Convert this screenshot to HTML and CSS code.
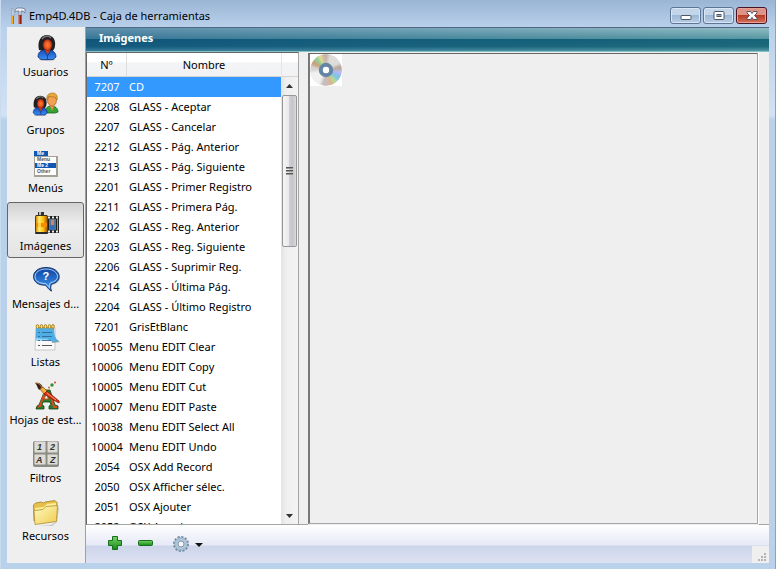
FILE: index.html
```html
<!DOCTYPE html>
<html lang="es">
<head>
<meta charset="utf-8">
<title>Emp4D.4DB - Caja de herramientas</title>
<link rel="stylesheet" href="styles.css">
</head>
<body>
<div class="window">
  <header class="titlebar">
    <svg class="app-icon" viewBox="0 0 16 18" aria-hidden="true">
      <path d="M2 1l2 2v6H2z" fill="#dfe6ee" stroke="#7d8797" stroke-width=".6"/>
      <rect x="1" y="9" width="3" height="8" fill="#f5a81c"/><rect x="3" y="9" width="1" height="8" fill="#c86a08"/>
      <path d="M5 5V3l2-2h5l3 1v4l-2-2h-2v5H9V4H7z" fill="#eef2f7" stroke="#69758a" stroke-width=".8"/>
      <rect x="8.500" y="8" width="3" height="9" fill="#e04420"/><rect x="10" y="8" width="1.500" height="9" fill="#96200e"/>
    </svg>
    <h1 class="title">Emp4D.4DB - Caja de herramientas</h1>
    <div class="controls">
      <button class="control" aria-label="Minimizar"><svg viewBox="0 0 28 15"><rect x="9.500" y="7.500" width="10" height="4" rx="1" fill="#fff" stroke="#4c5768"/></svg></button>
      <button class="control" aria-label="Maximizar"><svg viewBox="0 0 28 15"><rect x="9.500" y="3.500" width="10" height="8" rx="1" fill="#fff" stroke="#4c5768"/><rect x="12.500" y="6.500" width="4" height="2" fill="#8ea9cb" stroke="#4c5768"/></svg></button>
      <button class="control close" aria-label="Cerrar"><svg viewBox="0 0 28 15"><path d="M9.500 3.500h3.500l1.500 2 1.500-2h3.500v1.500l-2.500 2.500 2.500 2.500v1.500h-3.500l-1.500-2-1.500 2H9.500V10l2.500-2.500L9.500 5z" fill="#fff" stroke="#56555f"/></svg></button>
    </div>
  </header>

  <div class="body">
    <nav class="sidebar">
      <button class="nav-item">
        <svg viewBox="0 0 32 32" aria-hidden="true">
          <defs>
            <radialGradient id="face"><stop offset="0" stop-color="#ff8038"/><stop offset=".6" stop-color="#ea5420"/><stop offset="1" stop-color="#a62408"/></radialGradient>
            <linearGradient id="suit" x2="0" y2="1"><stop offset="0" stop-color="#1650b8"/><stop offset="1" stop-color="#3a8cf4"/></linearGradient>
            <g id="woman">
              <ellipse cx="17" cy="27.500" rx="8" ry="1.500" fill="#999" opacity=".6"/>
              <path d="M9 18C7 9 11 3 17 3c6 0 9 5 8 11-.5 4-3 6-6 6z" fill="#202022"/>
              <path d="M12 7c2-3 7-4 9-1" fill="none" stroke="#777" stroke-width="1.500"/>
              <path d="M8 25c0-5 3-7 7-7h4c4 0 7 3 7 7l-3 2.500H11z" fill="url(#suit)" stroke="#0b2c78" stroke-width=".8"/>
              <path d="M15 18h5l-2.500 5z" fill="#c63b14"/>
              <ellipse cx="17.500" cy="13" rx="4.600" ry="5.800" fill="url(#face)"/>
              <path d="M14.500 19l3 5 3-5M17.500 24v3" fill="none" stroke="#123784" stroke-width=".8"/>
            </g>
          </defs>
          <use href="#woman"/>
        </svg>
        <span>Usuarios</span>
      </button>
      <button class="nav-item">
        <svg viewBox="0 0 32 32" aria-hidden="true">
          <path d="M15 22c0-4 3-6 6-6 4 0 7 2 7 6l-3 1h-8z" fill="#35a238" stroke="#15651b" stroke-width=".8"/>
          <path d="M20 16h4l-2 5z" fill="#ef9245"/>
          <ellipse cx="22" cy="10.500" rx="4.500" ry="5.500" fill="#f2a052" stroke="#a65315" stroke-width=".6"/>
          <path d="M17 10c-1-5 2-7 6-7 3 0 5 3 4 7l-2-3c-2 0-4 0-6-1z" fill="#e9aa37" stroke="#9b641c" stroke-width=".6"/>
          <use href="#woman" transform="translate(-3 3.500) scale(.78)"/>
        </svg>
        <span>Grupos</span>
      </button>
      <button class="nav-item">
        <svg viewBox="0 0 32 32" aria-hidden="true">
          <rect x="4" y="8" width="24" height="21" fill="#a5a195"/><rect x="5" y="9" width="21" height="18" fill="#fff"/>
          <rect x="4" y="3" width="14" height="5" fill="#0e58b4"/><rect x="5" y="15" width="21" height="5" fill="#0e58b4"/>
          <g font-family="Liberation Sans" font-weight="bold" font-size="5"><text x="7" y="7" fill="#fff">Me</text><text x="7" y="13" fill="#555">Menu</text><text x="7" y="19" fill="#fff">Me 2</text><text x="7" y="25" fill="#555">Other</text></g>
        </svg>
        <span>Menús</span>
      </button>
      <button class="nav-item selected" aria-current="page">
        <svg viewBox="0 0 32 32" aria-hidden="true">
          <defs><linearGradient id="roll"><stop offset="0" stop-color="#c47800"/><stop offset=".3" stop-color="#fff06a"/><stop offset=".65" stop-color="#ffbd12"/><stop offset="1" stop-color="#9d5500"/></linearGradient></defs>
          <rect x="16" y="10" width="13" height="17" fill="#222"/>
          <rect x="19" y="13" width="7" height="11" fill="#557590"/><rect x="21" y="14" width="3" height="5" fill="#d2826b"/><rect x="20" y="19" width="5" height="5" fill="#356fb0"/>
          <path d="M18 11.500h11M18 25.500h11" stroke="#eee" stroke-width="2" stroke-dasharray="2 2"/>
          <path d="M27.500 13v11" stroke="#999" stroke-width="1"/>
          <rect x="8" y="6" width="6" height="4" fill="#333"/><rect x="9" y="6" width="2" height="3" fill="#bbb"/>
          <rect x="5.500" y="9.500" width="12" height="17" rx="1" fill="url(#roll)" stroke="#59400c"/>
          <rect x="6" y="17" width="11" height="4" fill="#f48b00"/><rect x="8" y="17" width="3" height="4" fill="#ffd144"/>
          <rect x="5" y="26" width="13" height="2" rx="1" fill="#2a2a2a"/><rect x="6" y="9" width="11" height="1" fill="#3d3420"/>
        </svg>
        <span>Imágenes</span>
      </button>
      <button class="nav-item">
        <svg viewBox="0 0 32 32" aria-hidden="true">
          <defs><linearGradient id="bubble" x2="0" y2="1"><stop offset="0" stop-color="#0b43a0"/><stop offset="1" stop-color="#3f9bf4"/></linearGradient></defs>
          <path d="M17 4C9 4 4 8 4 13c0 6 5 9 11 9 2 0 3 4 7 6-1-3-1-5 0-7 5-1 8-4 8-8 0-5-5-9-13-9z" fill="#777" opacity=".5"/>
          <path d="M16 3.500C8.500 3.500 3.500 7.500 3.500 12.500c0 5.500 5 8.500 11 8.500 2 0 3 4 7 6-1.500-3-1-5 0-7 5-1 7.500-4 7.500-7.500 0-5-5-9-13-9z" fill="url(#bubble)" stroke="#183b75"/>
          <path d="M16 5C9.500 5 5 8.500 5 12.500c0 4.500 4.500 7 10 7 2 0 3 3 4.500 4-.5-3 .5-4.500 1.500-5 4-1 6.500-3 6.500-6C27.500 8.500 23 5 16 5z" fill="none" stroke="#dceaff" stroke-width=".8"/>
          <text x="12.500" y="16" font-family="Liberation Sans" font-weight="bold" font-size="11" fill="#fff">?</text>
        </svg>
        <span>Mensajes d...</span>
      </button>
      <button class="nav-item">
        <svg viewBox="0 0 32 32" aria-hidden="true">
          <path d="M6 6h19v22H5z" fill="#fafafa" stroke="#aaa" stroke-width=".6"/>
          <path d="M8 23.500h2m2 0h10" stroke="#555"/>
          <path d="M22 15l8 5-8 1z" fill="#777" opacity=".7"/>
          <path d="M6 5h18c0 7 1 12 5 14-3 1-6 1-9 0H5.500z" fill="#51aee5"/>
          <path d="M5.500 19H20c-3-3-5-2-5-2l-9-1z" fill="#9bd5f5"/>
          <path d="M8 10.500h2m2 0h10M8 14.500h2m2 0h10M8 18.500h2m2 0h9" stroke="#26628c" stroke-width=".8"/>
          <g fill="#f3da86" stroke="#b18820"><ellipse cx="7.500" cy="4.500" rx="1.300" ry="2"/><ellipse cx="11.500" cy="4.500" rx="1.300" ry="2"/><ellipse cx="15.500" cy="4.500" rx="1.300" ry="2"/><ellipse cx="19.500" cy="4.500" rx="1.300" ry="2"/><ellipse cx="23" cy="4.500" rx="1.300" ry="2"/></g>
        </svg>
        <span>Listas</span>
      </button>
      <button class="nav-item">
        <svg viewBox="0 0 32 32" aria-hidden="true">
          <path d="M6 29l1-3 2-1 6-15h5l5 15 3 1v3h-9v-3l2-1-1-3h-7l-1 3 2 1v3z" fill="#287d2c" stroke="#16420f" stroke-width=".8"/>
          <path d="M14 19l2.500-6 2 6z" fill="#e8ede8" stroke="#de4b20"/><path d="M8 27l2-1 5-14M21 17l3 10h3" fill="none" stroke="#de4b20" stroke-width="1.800"/>
          <path d="M5 3c4-1 7 1 8 5l-3 2C7 9 8 6 5 3z" fill="#382016"/>
          <path d="M6 3c3 0 5 2 6 5" stroke="#c18947" fill="none"/>
          <path d="M10 9l3-2 4 4-3 3z" fill="#f5b13b" stroke="#8d5713" stroke-width=".8"/>
          <path d="M14 14l3-3 12 10c1 2 0 2-2 1z" fill="#e13516" stroke="#82160a" stroke-width=".8"/>
          <path d="M17 13l9 7" stroke="#ff9b73"/>
          <circle cx="22" cy="5" r="1.700" fill="#299333"/><circle cx="25" cy="2.500" r="1" fill="#d74322"/><circle cx="19" cy="7.500" r="1" fill="#b97725"/>
        </svg>
        <span>Hojas de est...</span>
      </button>
      <button class="nav-item">
        <svg viewBox="0 0 32 32" aria-hidden="true">
          <rect x="3" y="3" width="26" height="26" rx="2" fill="#8c8b84"/>
          <g fill="#ddddd7" stroke="#b7b6ae"><rect x="4.500" y="3.500" width="11" height="11" rx="1"/><rect x="17.500" y="3.500" width="10" height="11" rx="1"/><rect x="4.500" y="16.500" width="11" height="10" rx="1"/><rect x="17.500" y="16.500" width="10" height="10" rx="1"/></g>
          <g font-family="Liberation Sans" font-weight="bold" font-style="italic" font-size="9" fill="#333"><text x="7" y="12">1</text><text x="20" y="12">2</text><text x="6" y="25">A</text><text x="20" y="25">Z</text></g>
        </svg>
        <span>Filtros</span>
      </button>
      <button class="nav-item">
        <svg viewBox="0 0 32 32" aria-hidden="true">
          <defs><linearGradient id="folder" x2="1" y2="1"><stop offset="0" stop-color="#fffbc0"/><stop offset="1" stop-color="#efca50"/></linearGradient></defs>
          <path d="M8 29h13l6-4 1-15 1 2-2 14-5 4z" fill="#888" opacity=".4"/>
          <path d="M4 25L3.500 9l2-2 6-1 2 1 1.500-1 10-1.500 2 2-.5 16z" fill="#e6c04a" stroke="#a28128" stroke-width=".8"/>
          <path d="M5 12l9-1 3-3 9-1v5l-21 6z" fill="#fff0a0"/>
          <path d="M5 28.500L4 14.500l9-1 3-3 11.500-1-1 16z" fill="url(#folder)" stroke="#b08d2c" stroke-width=".8"/>
        </svg>
        <span>Recursos</span>
      </button>
    </nav>

    <main class="main">
      <h2 class="section-title">Imágenes</h2>
      <div class="panes">
        <section class="list-pane">
          <table class="list">
            <thead><tr><th class="num">Nº</th><th class="name">Nombre</th></tr></thead>
            <tbody>
              <tr class="active"><td>7207</td><td>CD</td></tr>
              <tr><td>2208</td><td>GLASS - Aceptar</td></tr>
              <tr><td>2207</td><td>GLASS - Cancelar</td></tr>
              <tr><td>2212</td><td>GLASS - Pág. Anterior</td></tr>
              <tr><td>2213</td><td>GLASS - Pág. Siguiente</td></tr>
              <tr><td>2201</td><td>GLASS - Primer Registro</td></tr>
              <tr><td>2211</td><td>GLASS - Primera Pág.</td></tr>
              <tr><td>2202</td><td>GLASS - Reg. Anterior</td></tr>
              <tr><td>2203</td><td>GLASS - Reg. Siguiente</td></tr>
              <tr><td>2206</td><td>GLASS - Suprimir Reg.</td></tr>
              <tr><td>2214</td><td>GLASS - Última Pág.</td></tr>
              <tr><td>2204</td><td>GLASS - Último Registro</td></tr>
              <tr><td>7201</td><td>GrisEtBlanc</td></tr>
              <tr><td>10055</td><td>Menu EDIT Clear</td></tr>
              <tr><td>10006</td><td>Menu EDIT Copy</td></tr>
              <tr><td>10005</td><td>Menu EDIT Cut</td></tr>
              <tr><td>10007</td><td>Menu EDIT Paste</td></tr>
              <tr><td>10038</td><td>Menu EDIT Select All</td></tr>
              <tr><td>10004</td><td>Menu EDIT Undo</td></tr>
              <tr><td>2054</td><td>OSX Add Record</td></tr>
              <tr><td>2050</td><td>OSX Afficher sélec.</td></tr>
              <tr><td>2051</td><td>OSX Ajouter</td></tr>
              <tr><td>2052</td><td>OSX Annuler</td></tr>
            </tbody>
          </table>
          <div class="scroll-column">
            <div class="scroll-head"></div>
            <div class="scrollbar">
              <button class="arrow" aria-label="Subir"><svg viewBox="0 0 17 17"><path d="M5 11l3.500-4 3.500 4z" fill="#333"/></svg></button>
              <div class="track"><div class="thumb"><i></i><i></i><i></i></div></div>
              <button class="arrow" aria-label="Bajar"><svg viewBox="0 0 17 17"><path d="M5 7l3.500 4L12 7z" fill="#333"/></svg></button>
            </div>
          </div>
        </section>
        <div class="splitter"></div>
        <section class="preview">
          <svg class="disc" viewBox="0 0 32 32" role="img" aria-label="CD">
            <defs><filter id="soft" x="-20%" y="-20%" width="140%" height="140%"><feGaussianBlur stdDeviation="1"/></filter><clipPath id="edge"><circle cx="16" cy="16" r="15.700"/></clipPath></defs>
            <rect width="32" height="32" fill="#fff"/>
            <g clip-path="url(#edge)"><rect width="32" height="32" fill="#d6d4d3"/>
              <g filter="url(#soft)">
                <path d="M16 16L-2 10V2l5 0z" fill="#c9a07c"/><path d="M16 16L1 3l6-5z" fill="#8ed39b"/><path d="M16 16L6-1l5-2z" fill="#e7dd8b"/><path d="M16 16L11-2h8z" fill="#c9b3ab"/>
                <path d="M16 16L20-2l15 5v9z" fill="#dfddda"/><path d="M16 16L34 9v8z" fill="#b9a9a0"/><path d="M16 16l18 2v6z" fill="#a9b3ff"/><path d="M16 16l18 7-5 6z" fill="#7fc7de"/><path d="M16 16l13 13-5 4z" fill="#b6d98a"/><path d="M16 16l9 17h-6z" fill="#ddb093"/><path d="M16 16l3 18h-9z" fill="#c6bdba"/><path d="M16 16L9 34-2 24v-6z" fill="#f1f1f1"/>
              </g>
            </g>
            <circle cx="16" cy="16" r="5.200" fill="#fff" stroke="#6485a4" stroke-width="4"/><circle cx="16" cy="16" r="2.800" fill="#fff"/>
          </svg>
        </section>
        <div class="edge"></div>
      </div>
      <footer class="toolbar">
        <button class="tool" aria-label="Añadir"><svg viewBox="0 0 18 18"><defs><linearGradient id="green" x2="0" y2="1"><stop offset="0" stop-color="#79d466"/><stop offset="1" stop-color="#128a18"/></linearGradient></defs><path d="M6.500 1.500h5v4h4v5h-4v4h-5v-4h-4v-5h4z" fill="url(#green)" stroke="#176e1b"/></svg></button>
        <button class="tool" aria-label="Eliminar"><svg viewBox="0 0 18 18"><rect x="1.500" y="5.500" width="14" height="5" rx="1" fill="url(#green)" stroke="#176e1b"/></svg></button>
        <button class="tool options" aria-label="Opciones"><svg viewBox="0 0 18 18"><circle cx="9" cy="9" r="7" fill="none" stroke="#71899f" stroke-width="2" stroke-dasharray="2.200 1.465"/><circle cx="9" cy="9" r="4.700" fill="#f4f6fb" stroke="#b0c5d9" stroke-width="3.500"/><circle cx="9" cy="9" r="6.300" fill="none" stroke="#849db4" stroke-width=".6"/><circle cx="9" cy="9" r="3" fill="#f4f6fb" stroke="#8199b0"/></svg><svg class="caret" viewBox="0 0 8 8"><path d="M0 3h8L4 7z" fill="#111"/></svg></button>
        <svg class="grip" viewBox="0 0 17 17" aria-hidden="true"><path d="M12 7h2v2h-2zM9 10h2v2H9zM12 10h2v2h-2zM6 13h2v2H6zM9 13h2v2H9zM12 13h2v2h-2z" fill="#b3b3b3"/></svg>
      </footer>
    </main>
  </div>
</div>
</body>
</html>
```
FILE: styles.css
```css
* { box-sizing: border-box; }

body {
  margin: 0;
  font: 11px/16px "Noto Sans", "Open Sans", sans-serif;
  color: #000;
}

button {
  margin: 0;
  padding: 0;
  border: 0;
  background: none;
  font: inherit;
  color: inherit;
}

svg { display: block; }

.window {
  display: flex;
  flex-direction: column;
  height: 100vh;
  padding: 0 6px 6px;
  background: linear-gradient(#9ab5d5, #bad1eb 28px, #d3e2f3 115px, #b9d1ea 120px);
  border-right: 1px solid #39c5e5;
  border-left: 1px solid #c9dbef;
}

.titlebar {
  display: flex;
  align-items: center;
  flex: none;
  height: 27px;
  padding: 4px 2px 0 3px;
}

.app-icon { width: 16px; height: 18px; }

.title {
  flex: 1;
  margin: 0 0 0 3px;
  font-size: 11px;
  font-weight: normal;
}

.controls { display: flex; gap: 2px; }

.control {
  width: 31px;
  height: 17px;
  border: 1px solid #5d7496;
  border-radius: 3px;
  box-shadow: inset 0 0 0 1px #d9e6f4;
  background: linear-gradient(#c3d5e9 50%, #9db8d5 50%, #b8cde5);
}

.control svg { width: 100%; height: 100%; }

.control.close {
  border-color: #4a1222;
  box-shadow: inset 0 0 0 1px #e4a396;
  background: linear-gradient(#dd9486 50%, #b83c25 50%, #d4735c);
}

.body { display: flex; flex: 1; min-height: 0; }

.sidebar {
  display: flex;
  flex-direction: column;
  flex: none;
  gap: 2px;
  width: 79px;
  padding: 1px 1px 0 0;
  background: #efefef;
  border-right: 1px solid #a0a0a0;
}

.nav-item {
  display: flex;
  flex-direction: column;
  align-items: center;
  flex: none;
  height: 56px;
  padding: 3px 0;
  border: 1px solid transparent;
  border-radius: 3px;
  white-space: nowrap;
}

.nav-item svg { width: 32px; height: 32px; flex: none; }

.nav-item.selected {
  border-color: #666;
  background: linear-gradient(#d2d2d2, #eee 40%, #e4e4e4);
}

.main { display: flex; flex-direction: column; flex: 1; min-width: 0; }

.section-title {
  flex: none;
  height: 25px;
  margin: 0;
  padding: 1px 13px 0;
  border-top: 1px solid #4f6785;
  border-bottom: 1px solid #86bfc4;
  background:
    linear-gradient(90deg, rgba(0, 60, 130, 0.35), rgba(0, 60, 130, 0)),
    linear-gradient(#92bcc3, #5697a3 46%, #166478 48%, #1e6a7c 80%, #559aa5);
  color: #fff;
  font-size: 11px;
  line-height: 18px;
}

.panes { display: flex; flex: 1; min-height: 0; background: #efefef; }

.list-pane {
  display: flex;
  flex: none;
  align-items: flex-start;
  width: 213px;
  overflow: hidden;
  border: 1px solid #a5a5a5;
  border-top-color: #666;
  border-left-color: #666;
  background: #fff;
}

.list {
  flex: 1;
  border-collapse: separate;
  border-spacing: 0;
  table-layout: fixed;
}

.list th {
  height: 24px;
  padding: 0;
  border-bottom: 1px solid #d5d5d5;
  background: linear-gradient(#fff 40%, #f3f4f6 42%, #f1f2f4);
  font-weight: normal;
}

.list .num { width: 40px; border-right: 1px solid #dedede; }

.list td { height: 20px; padding: 0; white-space: nowrap; }
.list td:first-child { text-align: center; }
.list td:last-child { padding-left: 2px; }

.active { background: #3399ff; color: #fff; }

.scroll-column {
  display: flex;
  flex-direction: column;
  flex: none;
  align-self: stretch;
  width: 17px;
}

.scroll-head {
  flex: none;
  height: 24px;
  border-bottom: 1px solid #d5d5d5;
  border-left: 1px solid #e5e5e5;
  background: linear-gradient(#fff 40%, #f3f4f6 42%, #f1f2f4);
}

.scrollbar {
  display: flex;
  flex-direction: column;
  flex: 1;
  min-height: 0;
  background: linear-gradient(90deg, #e3e3e3, #efefef 30%, #f3f3f3);
}

.arrow { flex: none; height: 17px; }
.arrow svg { width: 17px; height: 17px; }

.track { flex: 1; min-height: 0; padding: 1px 1px 0; }

.thumb {
  display: flex;
  flex-direction: column;
  align-items: center;
  justify-content: center;
  gap: 1px;
  height: 37%;
  border: 1px solid #979797;
  border-radius: 2px;
  background: linear-gradient(90deg, #f5f5f5, #e9e9eb 45%, #cfcfd3 50%, #c5c5c9 75%, #dcdcdf);
}

.thumb i { width: 7px; height: 2px; background: linear-gradient(#555 50%, #999 50%); }

.splitter { flex: none; width: 9px; border-bottom: 1px solid #a5a5a5; }

.preview {
  flex: 1;
  min-width: 0;
  margin: 1px 0;
  border: 1px solid #a5a5ab;
  border-top-color: #666;
  border-left: 2px solid #777;
}

.disc { width: 32px; height: 32px; }

.edge { flex: none; width: 11px; border-left: 1px solid #fff; border-bottom: 1px solid #a5a5a5; }

.toolbar {
  display: flex;
  align-items: center;
  flex: none;
  gap: 13px;
  height: 38px;
  padding-left: 20px;
  background: linear-gradient(#fff, #e6e9f6 53%, #cdd5ea 55%, #dde2f3);
}

.tool { display: flex; align-items: center; gap: 5px; }
.tool svg { width: 18px; height: 18px; }
.options { margin-left: 4px; }
.tool .caret { width: 8px; height: 8px; }

.grip {
  align-self: flex-end;
  width: 17px;
  height: 17px;
  margin-left: auto;
  background: #efefef;
}
```
